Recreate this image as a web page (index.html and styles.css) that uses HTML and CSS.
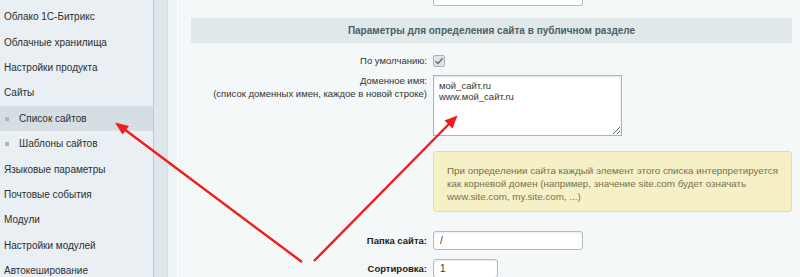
FILE: index.html
```html
<!DOCTYPE html>
<html lang="ru">
<head>
  <meta charset="UTF-8">
  <title>Настройки сайта</title>
  <link rel="stylesheet" href="styles.css">
</head>
<body>
  <div class="layout">
    <nav class="sidebar">
      <div class="menu-item">Облако 1С-Битрикс</div>
      <div class="menu-item">Облачные хранилища</div>
      <div class="menu-item">Настройки продукта</div>
      <div class="menu-item">Сайты</div>
      <div class="menu-item sub active">Список сайтов</div>
      <div class="menu-item sub">Шаблоны сайтов</div>
      <div class="menu-item">Языковые параметры</div>
      <div class="menu-item">Почтовые события</div>
      <div class="menu-item">Модули</div>
      <div class="menu-item">Настройки модулей</div>
      <div class="menu-item">Автокеширование</div>
    </nav>
    <div class="splitter"><div class="splitter-inner"></div></div>
    <main class="content">
      <div class="form-grid">
        <div></div>
        <div class="top-select"></div>

        <div class="section-title">Параметры для определения сайта в публичном разделе</div>

        <div class="label row-default">По умолчанию:</div>
        <div class="field row-default"><span class="checkbox"><svg width="10" height="10" viewBox="0 0 10 10"><path d="M1.5 5.2 L4 7.6 L8.6 2.2" fill="none" stroke="#5d6569" stroke-width="1.4"/></svg></span></div>

        <div class="label label-top">Доменное имя:<br>(список доменных имен, каждое в новой строке)</div>
        <div class="field"><textarea class="domains">мой_сайт.ru
www.мой_сайт.ru</textarea></div>

        <div></div>
        <div class="note">При определении сайта каждый элемент этого списка интерпретируется<br>как корневой домен (например, значение site.com будет означать<br>www.site.com, my.site.com, ...)</div>

        <div class="label bold row-folder">Папка сайта:</div>
        <div class="field row-folder"><input class="text-input wide" type="text" value="/"></div>

        <div class="label bold row-sort">Сортировка:</div>
        <div class="field row-sort"><input class="text-input narrow" type="text" value="1"></div>
      </div>
    </main>
  </div>
  <svg class="arrows" width="800" height="277" viewBox="0 0 800 277">
    <line x1="302" y1="262" x2="124" y2="129" stroke="#f21c1c" stroke-width="2.4"/>
    <polygon points="115,122.5 129,126 122.5,134.5" fill="#f21c1c"/>
    <line x1="314" y1="261" x2="450" y2="123" stroke="#f21c1c" stroke-width="2.4"/>
    <polygon points="457.5,115.5 452.5,128.5 444.5,120.5" fill="#f21c1c"/>
  </svg>
</body>
</html>
```

FILE: styles.css
```css
* { margin: 0; padding: 0; box-sizing: border-box; }
html, body { height: 100%; overflow: hidden; }
body {
  font-family: 'Liberation Sans', Arial, sans-serif;
  font-size: 9.5px;
  color: #333;
  background-color: #f5f8f9;
  position: relative;
}
.layout {
  display: flex;
  height: 100%;
}
.sidebar {
  width: 154px;
  flex-shrink: 0;
  background-color: #e9eff2;
  border-right: 1px solid #b9ccd4;
  padding-top: 4.3px;
}
.menu-item {
  height: 25.4px;
  line-height: 25.4px;
  padding-left: 4px;
  font-size: 10px;
  color: #2b3032;
  white-space: nowrap;
}
.menu-item.sub {
  padding-left: 19px;
  position: relative;
}
.menu-item.sub::before {
  content: "";
  position: absolute;
  left: 5px;
  top: 11px;
  width: 4px;
  height: 4px;
  background-color: #aab7bc;
}
.menu-item.active { background-color: #d5dfe3; }
.splitter {
  width: 24px;
  flex-shrink: 0;
  background-color: #dee8ec;
  border-right: 1px solid #ffffff;
}
.splitter-inner {
  margin-left: 13px;
  height: 100%;
  background-color: #eef3f5;
  border-left: 1px solid #d3e0e5;
}
.content {
  flex: 1;
  padding: 0 11px 0 13px;
}
.form-grid {
  display: grid;
  grid-template-columns: 236px 1fr;
  column-gap: 6px;
  align-items: center;
}
.top-select {
  width: 150px;
  height: 6px;
  border: 1px solid #b4bec3;
  border-top: none;
  border-radius: 0 0 3px 3px;
  background-color: #fff;
}
.section-title {
  grid-column: 1 / 3;
  margin-top: 12px;
  height: 25px;
  line-height: 25px;
  background-color: #e1e8ea;
  text-align: center;
  font-weight: bold;
  font-size: 10px;
  color: #4b5f64;
}
.label {
  text-align: right;
  line-height: 13px;
  white-space: nowrap;
}
.label-top { align-self: start; margin-top: 7px; }
.bold { font-weight: bold; color: #222; }
.field { display: flex; }
.row-default { margin-top: 11px; }
.checkbox {
  width: 12px;
  height: 12px;
  border: 1px solid #a7b0b4;
  border-radius: 2px;
  background-color: #dfe4e6;
  display: flex;
  align-items: center;
  justify-content: center;
}
.domains {
  margin-top: 8px;
  width: 189px;
  height: 61px;
  border: 1px solid #a9b3b8;
  background-color: #fff;
  font-family: 'Liberation Sans', Arial, sans-serif;
  font-size: 9.5px;
  line-height: 11px;
  color: #333;
  padding: 4px 5px;
  box-shadow: inset 0 1px 2px rgba(0, 0, 0, 0.12);
  outline: none;
}
.note {
  margin-top: 15px;
  height: 61px;
  padding: 12px 13px;
  background-color: #f6f0c6;
  border: 1px solid #e4dca3;
  border-radius: 3px;
  color: #77724f;
  font-size: 9.8px;
  line-height: 13px;
  white-space: nowrap;
}
.row-folder { margin-top: 19px; }
.row-sort { margin-top: 9px; }
.text-input {
  height: 19px;
  border: 1px solid #b2bcc1;
  border-radius: 3px;
  background-color: #fff;
  font-family: 'Liberation Sans', Arial, sans-serif;
  font-size: 10px;
  color: #333;
  padding: 0 6px;
  box-shadow: inset 0 1px 2px rgba(0, 0, 0, 0.08);
  outline: none;
}
.text-input.wide { width: 150px; }
.text-input.narrow { width: 65px; }
.arrows {
  position: absolute;
  left: 0;
  top: 0;
  pointer-events: none;
}
```
